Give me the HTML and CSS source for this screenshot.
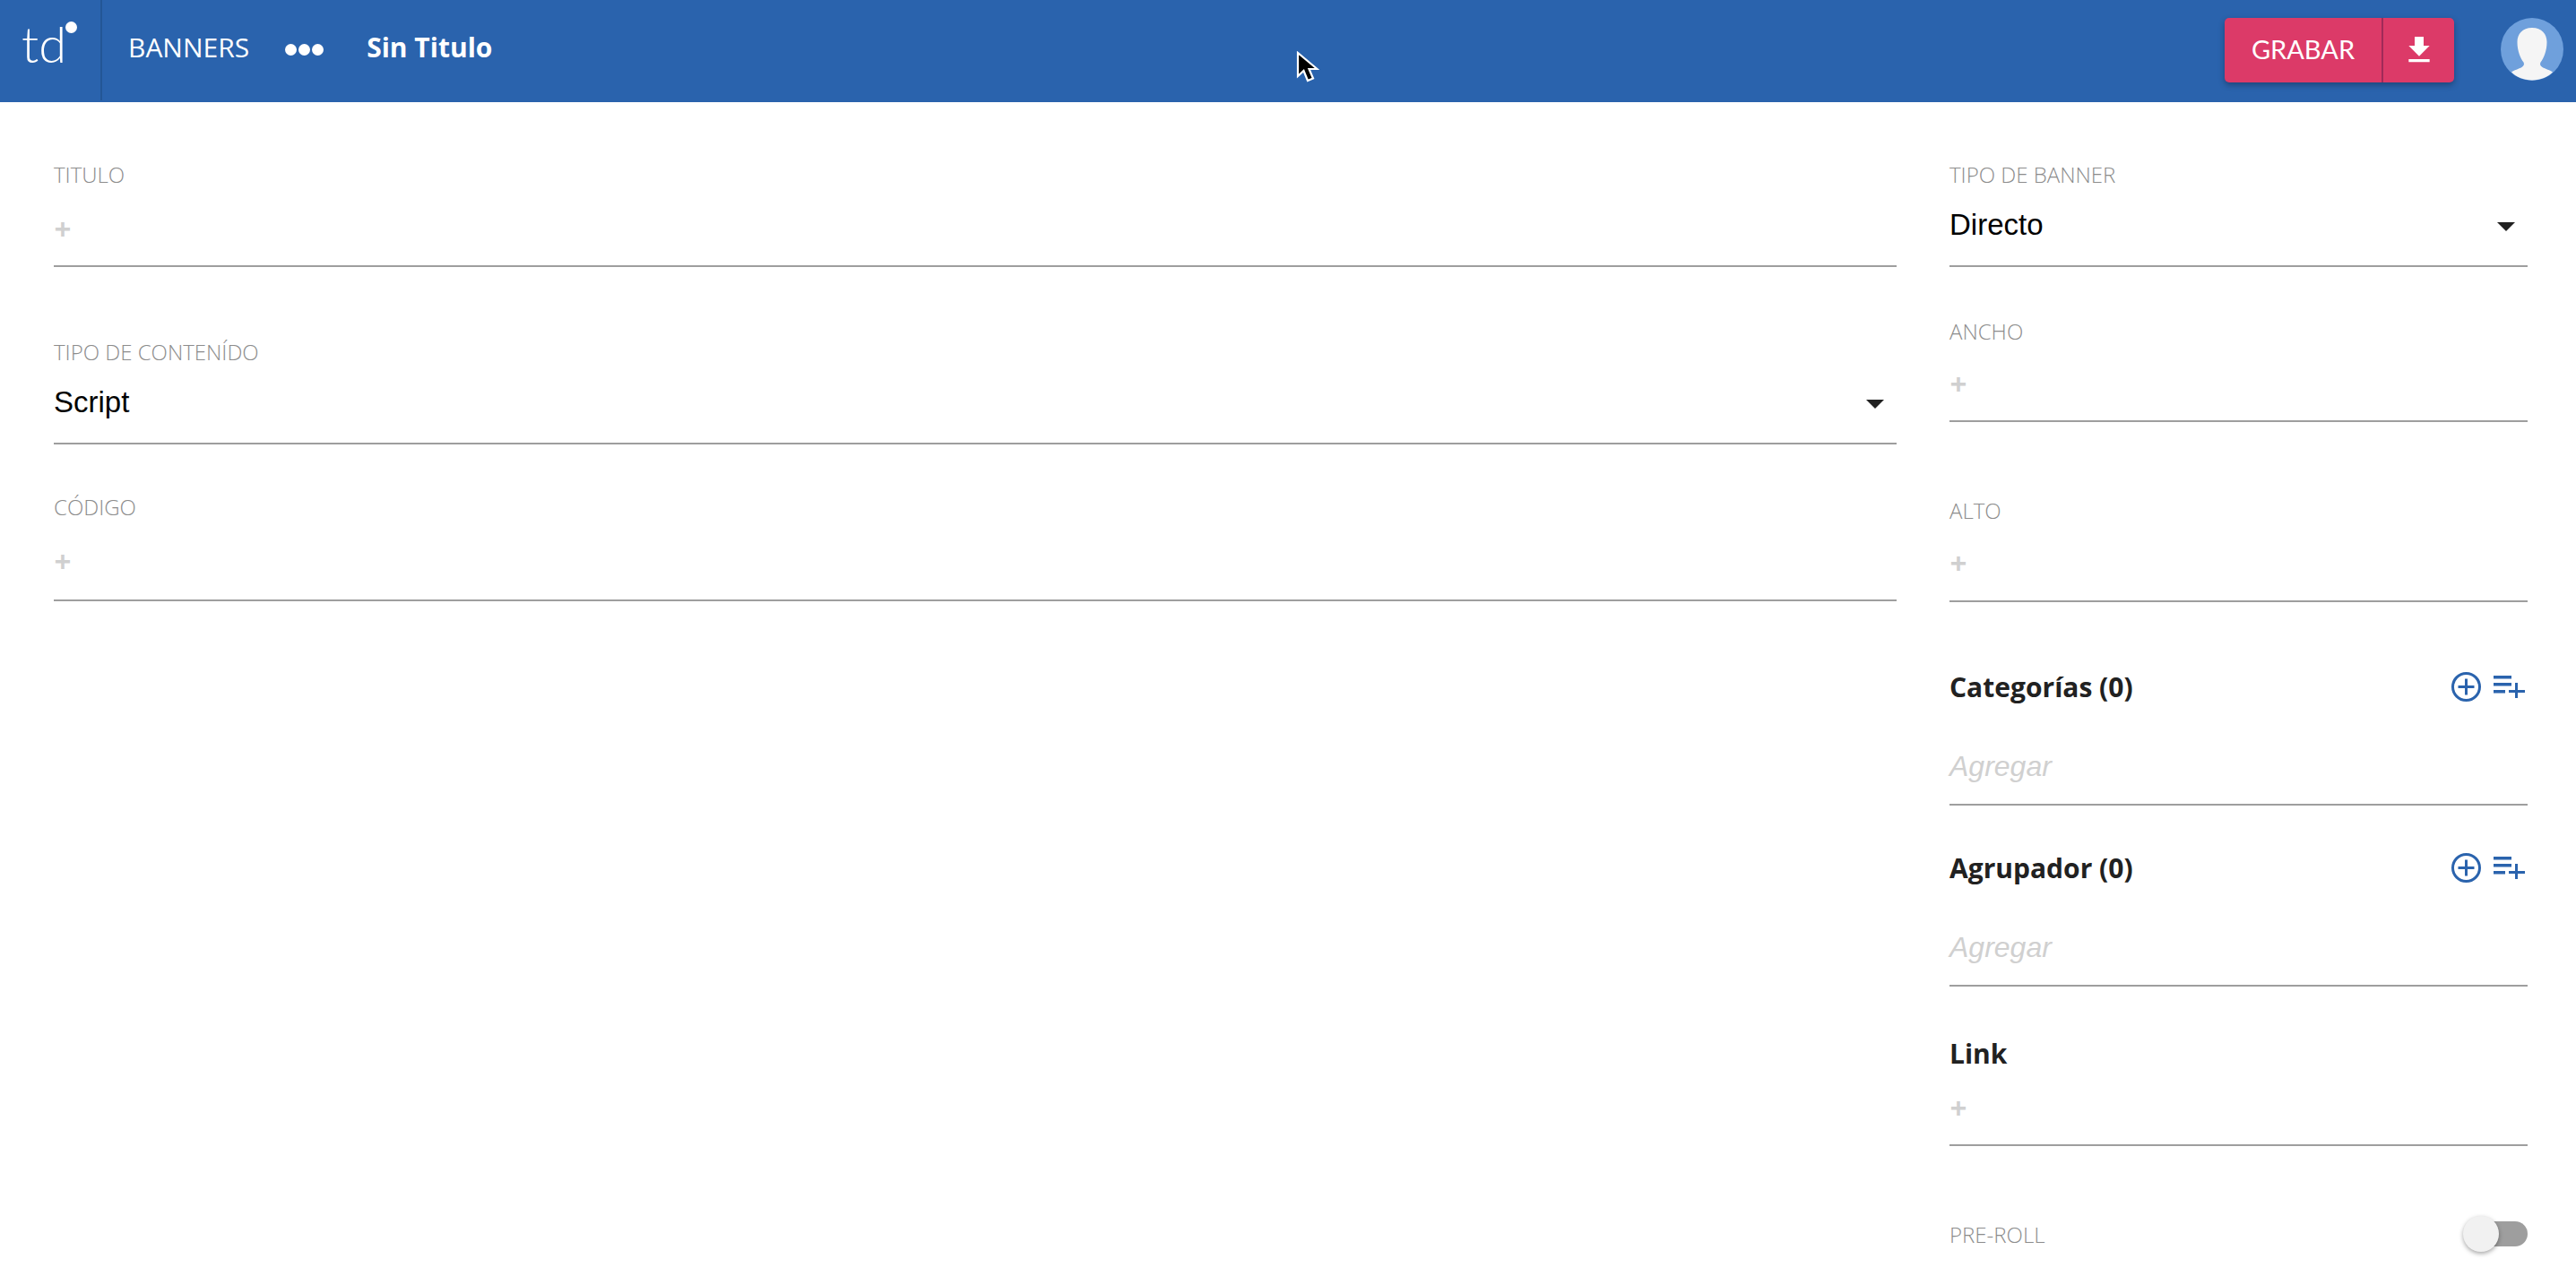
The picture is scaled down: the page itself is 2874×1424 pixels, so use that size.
FILE: index.html
```html
<!DOCTYPE html>
<html lang="es">
<head>
  <meta charset="UTF-8">
  <title>Banners</title>
  <link rel="stylesheet" href="styles.css">
</head>
<body>
  <header class="topbar">
    <div class="logo"><span class="logo-text">td</span><span class="logo-dot"></span></div>
    <nav class="crumbs">
      <span class="crumb">BANNERS</span>
      <span class="crumb-dots"><i></i><i></i><i></i></span>
      <span class="crumb-current">Sin Titulo</span>
    </nav>
    <div class="actions">
      <div class="save-group">
        <button class="save-btn">GRABAR</button>
        <button class="save-more">
          <svg viewBox="0 0 24 24" width="40" height="40"><path fill="#fff" d="M19 9h-4V3H9v6H5l7 7 7-7zM5 18v2h14v-2H5z"/></svg>
        </button>
      </div>
      <svg class="avatar" viewBox="0 0 70 70" width="70" height="70">
        <circle cx="35" cy="35" r="35" fill="#6fa0dc"/>
        <path fill="#f5f5f5" d="M35 11c-11 0-16.500 7-16.500 16 0 10 3.500 18 7 22.500 1 2 .5 4-2 5.500-3 1.800-9 3.500-11.500 5.500 5.500 5.500 13.500 9 23 9s17.500-3.500 23-9c-2.500-2-8.500-3.700-11.500-5.500-2.500-1.500-3-3.500-2-5.500 3.500-4.500 7-12.500 7-22.500 0-9-5.500-16-16.500-16z"/>
      </svg>
    </div>
  </header>

  <main class="page">
    <section class="col-main">
      <div class="field">
        <label class="field-label">TITULO</label>
        <div class="field-row"><span class="placeholder">+</span></div>
      </div>
      <div class="field field-select-gap">
        <label class="field-label">TIPO DE CONTENÍDO</label>
        <div class="field-row field-select"><span class="value">Script</span><span class="caret"></span></div>
      </div>
      <div class="field field-code">
        <label class="field-label">CÓDIGO</label>
        <div class="field-row field-row-tall"><span class="placeholder">+</span></div>
      </div>
    </section>

    <aside class="col-side">
      <div class="field">
        <label class="field-label">TIPO DE BANNER</label>
        <div class="field-row field-select"><span class="value">Directo</span><span class="caret"></span></div>
      </div>
      <div class="field field-width">
        <label class="field-label">ANCHO</label>
        <div class="field-row field-row-short"><span class="placeholder">+</span></div>
      </div>
      <div class="field field-height">
        <label class="field-label">ALTO</label>
        <div class="field-row field-row-alto"><span class="placeholder">+</span></div>
      </div>

      <div class="group group-first">
        <div class="group-head">
          <h3>Categorías (0)</h3>
          <div class="group-icons">
            <svg viewBox="0 0 33 33" width="33" height="33"><circle cx="16.500" cy="16.500" r="15" fill="none" stroke="#2a63ad" stroke-width="3"/><path stroke="#2a63ad" stroke-width="3" d="M16.500 7.500v18M7.500 16.500h18"/></svg>
            <svg viewBox="0 0 35 26" width="35" height="26"><path fill="#2a63ad" d="M0 1h20v3.400H0zM0 9h20v3.400H0zM0 17h13v3.400H0zM24 9h3v8h8v3h-8v6h-3v-6h-7v-3h7z"/></svg>
          </div>
        </div>
        <div class="group-input"><span class="add-hint">Agregar</span></div>
      </div>

      <div class="group">
        <div class="group-head">
          <h3>Agrupador (0)</h3>
          <div class="group-icons">
            <svg viewBox="0 0 33 33" width="33" height="33"><circle cx="16.500" cy="16.500" r="15" fill="none" stroke="#2a63ad" stroke-width="3"/><path stroke="#2a63ad" stroke-width="3" d="M16.500 7.500v18M7.500 16.500h18"/></svg>
            <svg viewBox="0 0 35 26" width="35" height="26"><path fill="#2a63ad" d="M0 1h20v3.400H0zM0 9h20v3.400H0zM0 17h13v3.400H0zM24 9h3v8h8v3h-8v6h-3v-6h-7v-3h7z"/></svg>
          </div>
        </div>
        <div class="group-input"><span class="add-hint">Agregar</span></div>
      </div>

      <div class="group group-link">
        <div class="group-head">
          <h3>Link</h3>
        </div>
        <div class="link-input"><span class="placeholder">+</span></div>
      </div>

      <div class="switch-row">
        <span class="field-label">PRE-ROLL</span>
        <span class="switch"><span class="switch-thumb"></span></span>
      </div>
    </aside>
  </main>

  <svg class="cursor" viewBox="0 0 26 38" width="26" height="38">
    <path fill="#000" stroke="#fff" stroke-width="2.200" d="M2 2v26l6.500-6 4.500 11 6-2.500-4.500-10.500h9z"/>
  </svg>
</body>
</html>
```

FILE: styles.css
```css
:root {
  --blue: #2a63ad;
  --line: #9e9e9e;
  --hint: #d0d0d0;
}

html, body {
  margin: 0;
  height: 100%;
  overflow: hidden;
  background: #fff;
}

body {
  font-family: "Open Sans", sans-serif;
  color: #212121;
}

.topbar {
  height: 114px;
  background: var(--blue);
  display: flex;
  align-items: flex-start;
}

.logo {
  width: 112px;
  height: 112px;
  border-right: 2px solid #235696;
  position: relative;
  flex: none;
}

.logo-text {
  position: absolute;
  left: 24px;
  top: 14px;
  font-family: "Lato", sans-serif;
  font-weight: 300;
  font-size: 56px;
  line-height: 70px;
  color: #fff;
}

.logo-dot {
  position: absolute;
  left: 73px;
  top: 24px;
  width: 13px;
  height: 13px;
  border-radius: 50%;
  background: #fff;
}

.crumbs {
  display: flex;
  align-items: center;
  height: 104px;
  padding-left: 29px;
  color: #fff;
  font-size: 30px;
}

.crumb-dots {
  display: flex;
  gap: 2px;
  margin: 6px 48px 0 40px;
}

.crumb-dots i {
  width: 13px;
  height: 13px;
  border-radius: 50%;
  background: #fff;
}

.crumb-current {
  font-weight: 700;
}

.actions {
  margin-left: auto;
  display: flex;
  align-items: flex-start;
  gap: 52px;
  padding: 20px 14px 0 0;
}

.save-group {
  display: flex;
  height: 72px;
  border-radius: 5px;
  background: #dc3a68;
  box-shadow: 0 3px 7px rgba(0, 0, 0, 0.3);
}

.save-group button {
  border: none;
  background: none;
  color: #fff;
  padding: 0;
  display: flex;
  align-items: center;
  justify-content: center;
}

.save-btn {
  width: 177px;
  font-family: "Lato", sans-serif;
  font-size: 29px;
  border-right: 2px solid #a02a58 !important;
  padding-bottom: 3px !important;
}

.save-more {
  width: 79px;
}

.page {
  display: flex;
  gap: 59px;
  padding: 66px 54px 0 60px;
}

.col-main {
  flex: 1;
}

.col-side {
  width: 645px;
  flex: none;
}

.field-select-gap {
  margin-top: 80px;
}

.field-code {
  margin-top: 55px;
}

.field-width {
  margin-top: 57px;
}

.field-height {
  margin-top: 84px;
}

.field-label {
  display: block;
  font-size: 24px;
  font-weight: 300;
  line-height: 30px;
  color: #8c8c8c;
}

.field-row {
  height: 86px;
  border-bottom: 2px solid var(--line);
  display: flex;
  align-items: flex-start;
}

.field-row-tall {
  height: 88px;
}

.field-row-short {
  height: 84px;
}

.field-row-alto {
  height: 85px;
}

.placeholder {
  font-family: "Liberation Sans", sans-serif;
  font-style: italic;
  font-weight: 700;
  font-size: 32px;
  line-height: 40px;
  margin-top: 25px;
  color: var(--hint);
}

.field-row-short .placeholder,
.field-row-alto .placeholder {
  margin-top: 23px;
}

.field-select {
  justify-content: space-between;
}

.value {
  font-family: "Liberation Sans", sans-serif;
  font-size: 33px;
  line-height: 40px;
  margin-top: 21px;
  color: #000;
}

.caret {
  width: 0;
  height: 0;
  border-left: 10px solid transparent;
  border-right: 10px solid transparent;
  border-top: 10px solid #212121;
  margin: 38px 14px 0 0;
}

.group-first {
  margin-top: 75px;
}

.group {
  margin-bottom: 50px;
}

.group-head {
  display: flex;
  justify-content: space-between;
  align-items: center;
  height: 40px;
}

.group-head h3 {
  margin: 0;
  font-size: 30px;
  font-weight: 700;
  line-height: 40px;
}

.group-icons {
  display: flex;
  align-items: center;
  gap: 14px;
  padding: 0 3px 2px 0;
}

.group-input {
  height: 110px;
  border-bottom: 2px solid var(--line);
}

.add-hint {
  display: block;
  font-family: "Liberation Sans", sans-serif;
  font-style: italic;
  font-size: 32px;
  line-height: 40px;
  padding-top: 48px;
  color: var(--hint);
}

.group-link {
  margin: 55px 0 0;
}

.link-input {
  height: 61px;
  border-bottom: 2px solid var(--line);
}

.link-input .placeholder {
  display: block;
  margin-top: 20px;
}

.switch-row {
  margin-top: 84px;
  display: flex;
  justify-content: space-between;
  align-items: flex-start;
}

.switch {
  position: relative;
  width: 65px;
  height: 28px;
  border-radius: 14px;
  background: var(--line);
}

.switch-thumb {
  position: absolute;
  left: -7px;
  top: -6px;
  width: 40px;
  height: 40px;
  border-radius: 50%;
  background: #f1f1f1;
  box-shadow: 0 2px 5px rgba(0, 0, 0, 0.35);
}

.cursor {
  position: absolute;
  left: 1446px;
  top: 57px;
}
```
